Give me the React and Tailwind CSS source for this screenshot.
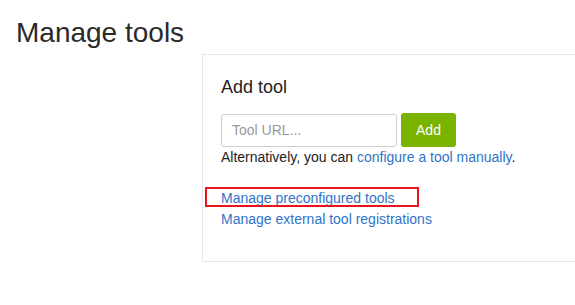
export default function App() {
  return (
    <div className="h-[305px] w-[575px] overflow-hidden bg-white font-['Liberation_Sans',Arial,sans-serif] text-[#222]">
      <div className="pl-4 pt-[16px]">
        <h2 className="text-[28px] leading-[34px] text-[#2a2a2a]">Manage tools</h2>
      </div>
      <div className="ml-[202px] mt-[4px] w-[420px] border border-[#e6e6e6] pl-[18px] pt-[22px] pb-[32px]">
        <h4 className="text-[18px] leading-[20px] text-[#222]">Add tool</h4>
        <div className="mt-[16px] flex items-center gap-[4px]">
          <input
            type="text"
            placeholder="Tool URL..."
            className="h-[33px] w-[176px] rounded-[3px] border border-[#cfcfcf] px-[10px] text-[14px] text-[#333] placeholder:text-[#999] focus:outline-none"
          />
          <button className="h-[34px] w-[55px] rounded-[3px] bg-[#79b300] text-[14px] text-white">
            Add
          </button>
        </div>
        <p className="text-[14px] leading-[20px]">
          Alternatively, you can{' '}
          <a href="#" className="text-[#2f74c9]">configure a tool manually</a>.
        </p>
        <div className="mt-[21px] flex flex-col text-[14px] leading-[20px]">
          <div className="relative">
            <span className="pointer-events-none absolute left-[-16px] top-[-1px] h-[20px] w-[214px] border-2 border-[#e8141b]"></span>
            <a href="#" className="text-[#2f74c9]">Manage preconfigured tools</a>
          </div>
          <div className="mt-[1px]">
            <a href="#" className="text-[#2f74c9]">Manage external tool registrations</a>
          </div>
        </div>
      </div>
    </div>
  );
}
